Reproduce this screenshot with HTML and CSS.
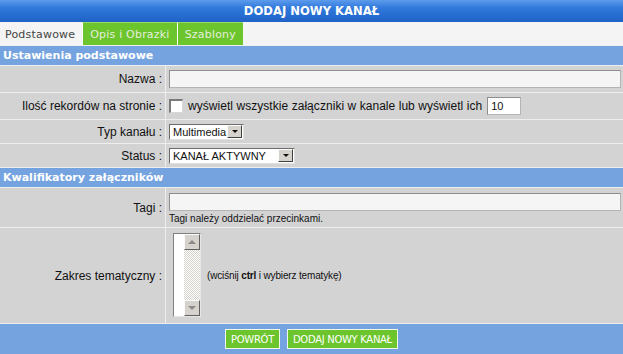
FILE: index.html
```html
<!DOCTYPE html>
<html lang="pl">
<head>
<meta charset="utf-8">
<title>Dodaj nowy kanał</title>
<link rel="stylesheet" href="styles.css">
</head>
<body>
<div class="page">
  <div class="title">DODAJ NOWY KANAŁ</div>
  <div class="tabs">
    <span class="tab active">Podstawowe</span>
    <span class="tab">Opis i Obrazki</span>
    <span class="tab">Szablony</span>
  </div>
  <div class="section">Ustawienia podstawowe</div>
  <div class="row h26">
    <div class="label">Nazwa :</div>
    <div class="value"><span class="input wide"></span></div>
  </div>
  <div class="row h26">
    <div class="label">Ilość rekordów na stronie :</div>
    <div class="value">
      <span class="checkbox"></span>
      <span class="text">wyświetl wszystkie załączniki w kanale lub wyświetl ich</span>
      <span class="input num">10</span>
    </div>
  </div>
  <div class="row h23">
    <div class="label">Typ kanału :</div>
    <div class="value">
      <span class="select typ"><span class="sel-txt">Multimedia</span><span class="sel-btn"><span class="arrow-down"></span></span></span>
    </div>
  </div>
  <div class="row h23">
    <div class="label">Status :</div>
    <div class="value">
      <span class="select status"><span class="sel-txt">KANAŁ AKTYWNY</span><span class="sel-btn"><span class="arrow-down"></span></span></span>
    </div>
  </div>
  <div class="section">Kwalifikatory załączników</div>
  <div class="row h39">
    <div class="label">Tagi :</div>
    <div class="value col">
      <span class="input wide"></span>
      <span class="note">Tagi należy oddzielać przecinkami.</span>
    </div>
  </div>
  <div class="row h95">
    <div class="label">Zakres tematyczny :</div>
    <div class="value">
      <span class="listbox">
        <span class="lb-area"></span>
        <span class="lb-scroll">
          <span class="sb-btn"><span class="arrow-up"></span></span>
          <span class="sb-track"></span>
          <span class="sb-btn"><span class="arrow-down grey"></span></span>
        </span>
      </span>
      <span class="hint">(wciśnij <b>ctrl</b> i wybierz tematykę)</span>
    </div>
  </div>
  <div class="footer">
    <span class="button">POWRÓT</span>
    <span class="button">DODAJ NOWY KANAŁ</span>
  </div>
</div>
</body>
</html>
```

FILE: styles.css
```css
html, body {
  margin: 0;
  padding: 0;
  background: #f2f2f2;
}

.page {
  width: 623px;
  display: flex;
  flex-direction: column;
  gap: 1px;
  background: #eeeeee;
  font-family: "Liberation Sans", Arial, sans-serif;
  font-size: 12px;
  color: #111;
}

.title {
  height: 22px;
  margin-bottom: -1px;
  display: flex;
  align-items: center;
  justify-content: center;
  background: linear-gradient(to bottom, #5d9cec 0%, #3179dc 35%, #1f62c6 100%);
  color: #fff;
  font-family: "DejaVu Sans", Verdana, sans-serif;
  font-weight: bold;
  font-size: 11.6px;
}

.tabs {
  height: 23px;
  display: flex;
  background: #f4f4f4;
}

.tab {
  display: flex;
  align-items: center;
  padding: 1px 7px 0 7px;
  font-family: "DejaVu Sans", Verdana, sans-serif;
  font-size: 11px;
  letter-spacing: 0.2px;
  color: #e4eedd;
  background: #6cc52c;
  border-top: 1px solid #9ad86c;
  border-left: 1px solid #ffffff;
}

.tab.active {
  background: #f4f4f4;
  color: #444;
  border-top: 1px solid #f4f4f4;
  border-left: none;
  padding: 1px 7px 0 5px;
}

.section {
  height: 19px;
  display: flex;
  align-items: center;
  padding-left: 3px;
  background: #74a3e0;
  color: #fff;
  font-family: "DejaVu Sans", Verdana, sans-serif;
  font-weight: bold;
  font-size: 11px;
}

.row {
  display: grid;
  grid-template-columns: 165px 1fr;
  column-gap: 1px;
}

.h26 { height: 26px; }
.h23 { height: 23px; }
.h39 { height: 39px; }
.h95 { height: 95px; }

.label {
  background: #d3d3d3;
  display: flex;
  align-items: center;
  justify-content: flex-end;
  padding-right: 3px;
  color: #111;
}

.value {
  background: #d3d3d3;
  display: flex;
  align-items: center;
  padding: 0 2px 0 3px;
}

.value.col {
  flex-direction: column;
  align-items: stretch;
  justify-content: flex-start;
  padding-top: 5px;
}

.input {
  display: inline-flex;
  align-items: center;
  box-sizing: border-box;
  height: 18px;
  border: 1px solid #b4b4b4;
  border-top-color: #8e8e8e;
  border-left-color: #8e8e8e;
  background: #f5f5f5;
}

.input.wide {
  width: 100%;
}

.input.num {
  width: 34px;
  margin-left: 5px;
  background: #fff;
  padding-left: 3px;
  font-size: 11px;
}

.checkbox {
  box-sizing: border-box;
  width: 14px;
  height: 14px;
  background: #fff;
  border: 1px solid #d8d8d8;
  border-top: 2px solid #7a7a7a;
  border-left: 2px solid #7a7a7a;
  margin-right: 5px;
}

.text {
  color: #111;
  letter-spacing: 0.05px;
}

.select {
  display: inline-flex;
  box-sizing: border-box;
  height: 16px;
  background: #fff;
  border: 1px solid #e0e0e0;
  border-top-color: #6e6e6e;
  border-left-color: #6e6e6e;
  align-items: stretch;
}

.select.typ { width: 75px; }
.select.status { width: 126px; }

.sel-txt {
  flex: 1;
  display: flex;
  align-items: center;
  padding-left: 3px;
  font-size: 11px;
  color: #111;
  white-space: nowrap;
  overflow: hidden;
}

.sel-btn {
  width: 15px;
  box-sizing: border-box;
  margin: 0 1px 1px 0;
  background: #d6d3cc;
  border: 1px solid #404040;
  border-top-color: #fafafa;
  border-left-color: #fafafa;
  display: flex;
  align-items: center;
  justify-content: center;
}

.arrow-down {
  width: 0;
  height: 0;
  border-left: 3px solid transparent;
  border-right: 3px solid transparent;
  border-top: 3px solid #111;
}

.arrow-down.grey {
  border-top-color: #8a8a8a;
  border-left-width: 4px;
  border-right-width: 4px;
  border-top-width: 4px;
}

.arrow-up {
  width: 0;
  height: 0;
  border-left: 4px solid transparent;
  border-right: 4px solid transparent;
  border-bottom: 4px solid #8a8a8a;
}

.note {
  margin-top: 2px;
  font-size: 10px;
  color: #111;
}

.listbox {
  display: inline-flex;
  box-sizing: border-box;
  width: 28px;
  height: 84px;
  margin-left: 4px;
  margin-top: -2px;
  border: 1px solid #e6e6e6;
  border-top-color: #808080;
  border-left-color: #808080;
  background: #fff;
}

.lb-area {
  width: 10px;
  background: #fff;
}

.lb-scroll {
  flex: 1;
  display: flex;
  flex-direction: column;
}

.sb-btn {
  height: 16px;
  box-sizing: border-box;
  background: #d6d3cc;
  border: 1px solid #606060;
  border-top-color: #fafafa;
  border-left-color: #fafafa;
  display: flex;
  align-items: center;
  justify-content: center;
}

.sb-track {
  flex: 1;
  background: repeating-conic-gradient(#ffffff 0 25%, #d6d3cc 0 50%) 0 0 / 2px 2px;
}

.hint {
  margin-left: 6px;
  font-size: 10px;
  letter-spacing: -0.15px;
  color: #111;
}

.hint b {
  font-weight: bold;
}

.footer {
  height: 31px;
  background: #74a3e0;
  display: flex;
  justify-content: center;
  align-items: flex-start;
  gap: 7px;
  padding-top: 5px;
  box-sizing: border-box;
}

.button {
  height: 20px;
  box-sizing: border-box;
  display: inline-flex;
  align-items: center;
  padding: 0 5px;
  background: #6cc52c;
  border: 1px solid #f0f8ea;
  color: #fff;
  font-family: "DejaVu Sans", Verdana, sans-serif;
  font-size: 10px;
  letter-spacing: -0.3px;
}
```
